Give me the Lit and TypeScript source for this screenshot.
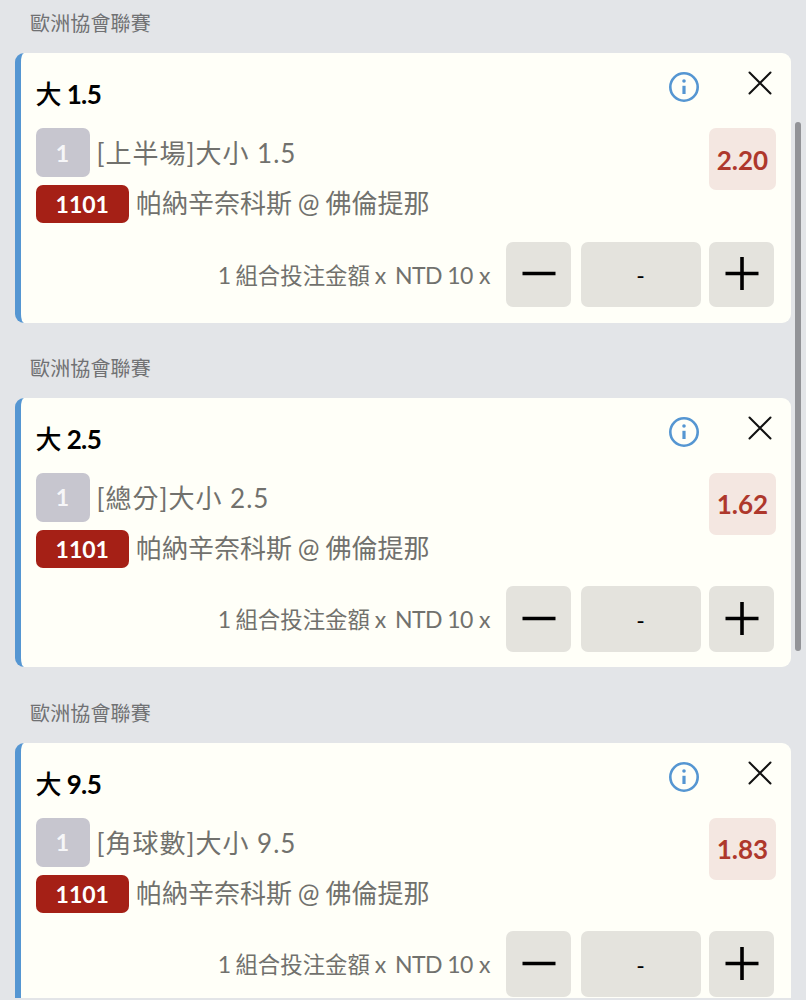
import { LitElement, html, css } from "lit";
import { customElement, property } from "lit/decorators.js";

@customElement("bet-card")
class BetCard extends LitElement {
  @property() league = "";
  @property() line = "";
  @property() market = "";
  @property() odds = "";

  static styles = css`
    :host {
      display: block;
      height: 344.75px;
      flex: none;
    }
    * {
      box-sizing: border-box;
    }
    .league {
      height: 53px;
      padding: 8.4px 0 0 30px;
      font-size: 20px;
      line-height: 30px;
      letter-spacing: 0.15px;
      color: #707173;
    }
    .card {
      display: grid;
      grid-template-columns: 1fr auto;
      grid-template-rows: 75px 57px 56.5px 80px;
      width: 776px;
      height: 269.5px;
      margin-left: 15px;
      padding: 0 17px 0 14.5px;
      border-left: 6px solid #5596d2;
      border-radius: 9px;
      background: #fffff8;
      color: #71716d;
    }
    .title {
      font-size: 26px;
      font-weight: 700;
      line-height: 36px;
      padding-top: 23px;
      color: #000;
      letter-spacing: -0.6px;
    }
    .title .cjk {
      font-weight: 500;
    }
    .icons {
      display: flex;
      justify-content: flex-end;
      padding: 18px 2px 0 0;
    }
    .icons svg {
      display: block;
    }
    .info {
      margin-right: 48px;
    }
    .row {
      display: flex;
      align-items: flex-start;
      white-space: nowrap;
      font-size: 26px;
      line-height: 38px;
    }
    .count,
    .code {
      display: flex;
      align-items: center;
      justify-content: center;
      border-radius: 7px;
      color: #fff;
      font-size: 23px;
      font-weight: 700;
      flex: none;
    }
    .count {
      width: 54px;
      height: 49px;
      background: #c7c6cf;
      color: #f6f6f8;
      margin-right: 7px;
    }
    .code {
      width: 93.5px;
      height: 38px;
      background: #a52016;
      margin-right: 7px;
    }
    .market {
      padding-top: 6px;
      letter-spacing: 1px;
    }
    .teams {
      letter-spacing: 0;
      word-spacing: -0.8px;
      margin-top: -1px;
    }
    .odds {
      display: flex;
      align-items: center;
      justify-content: center;
      justify-self: end;
      width: 67px;
      height: 62px;
      padding-top: 1px;
      margin-right: -2px;
      border-radius: 7px;
      background: #f4e7e1;
      color: #ae382c;
      font-size: 26px;
      font-weight: 700;
    }
    .stake {
      grid-column: 1 / 3;
      display: flex;
      justify-content: flex-end;
      align-items: flex-start;
    }
    .label {
      margin-right: 15px;
      font-size: 23px;
      line-height: 66px;
      white-space: nowrap;
    }
    .label .cjk {
      margin: 0 -1px 0 -1.5px;
      font-size: 22.4px;
    }
    .label .currency {
      margin: 0 0.5px 0 3px;
      letter-spacing: -0.6px;
    }
    .btn,
    .amount {
      display: flex;
      align-items: center;
      justify-content: center;
      height: 65.5px;
      border-radius: 7px;
      background: #e4e3dd;
    }
    .btn {
      width: 65.5px;
    }
    .btn svg {
      position: relative;
      left: 1px;
    }
    .amount {
      width: 120px;
      margin: 0 8px 0 9.5px;
      padding-top: 2px;
      color: #000;
      font-size: 23px;
    }
    .matchup {
      grid-column: 1 / 3;
    }
  `;

  render() {
    return html`
      <div class="league">${this.league}</div>
      <div class="card">
        <div class="title"><span class="cjk">大</span> ${this.line}</div>
        <div class="icons">
          <svg class="info" width="32" height="32" viewBox="0 0 32 32">
            <circle cx="16" cy="16" r="13.7" fill="none" stroke="#5596d2" stroke-width="2.6" />
            <circle cx="16" cy="10" r="1.8" fill="#5596d2" />
            <path d="M16 14.8v8.2" stroke="#5596d2" stroke-width="3.2" />
          </svg>
          <svg width="24" height="24" viewBox="0 0 24 24">
            <path d="M1.5 1.5l21 21M22.5 1.5l-21 21" stroke="#111" stroke-width="2" stroke-linecap="round" />
          </svg>
        </div>
        <div class="row">
          <span class="count">1</span>
          <span class="market">[${this.market}]大小 ${this.line}</span>
        </div>
        <div class="odds">${this.odds}</div>
        <div class="row matchup">
          <span class="code">1101</span>
          <span class="teams">帕納辛奈科斯 @ 佛倫提那</span>
        </div>
        <div class="stake">
          <span class="label">1 <span class="cjk">組合投注金額</span> x <span class="currency">NTD 10</span> x</span>
          <span class="btn">
            <svg width="34" height="34" viewBox="0 0 34 34">
              <path d="M.5 16.5h33" stroke="#000" stroke-width="3.6" />
            </svg>
          </span>
          <span class="amount">-</span>
          <span class="btn">
            <svg width="34" height="34" viewBox="0 0 34 34">
              <path d="M.5 16.5h33M17 0v33" stroke="#000" stroke-width="3.6" />
            </svg>
          </span>
        </div>
      </div>
    `;
  }
}

@customElement("app-root")
class AppRoot extends LitElement {
  static styles = css`
    :host {
      display: block;
      position: relative;
      width: 806px;
      height: 1000px;
      overflow: hidden;
      background: #e3e5e8;
      font-family: Lato, "Noto Sans CJK TC", sans-serif;
    }
    .list {
      display: flex;
      flex-direction: column;
      height: 998px;
      overflow: hidden;
    }
    .thumb {
      position: absolute;
      top: 122px;
      right: 5.5px;
      width: 6px;
      height: 529px;
      border-radius: 3px;
      background: #929397;
    }
  `;

  private bets = [
    { line: "1.5", market: "上半場", odds: "2.20" },
    { line: "2.5", market: "總分", odds: "1.62" },
    { line: "9.5", market: "角球數", odds: "1.83" },
  ];

  render() {
    return html`
      <div class="list">
        ${this.bets.map(
          (b) => html`<bet-card
            league="歐洲協會聯賽"
            .line=${b.line}
            .market=${b.market}
            .odds=${b.odds}
          ></bet-card>`
        )}
      </div>
      <div class="thumb"></div>
    `;
  }
}
